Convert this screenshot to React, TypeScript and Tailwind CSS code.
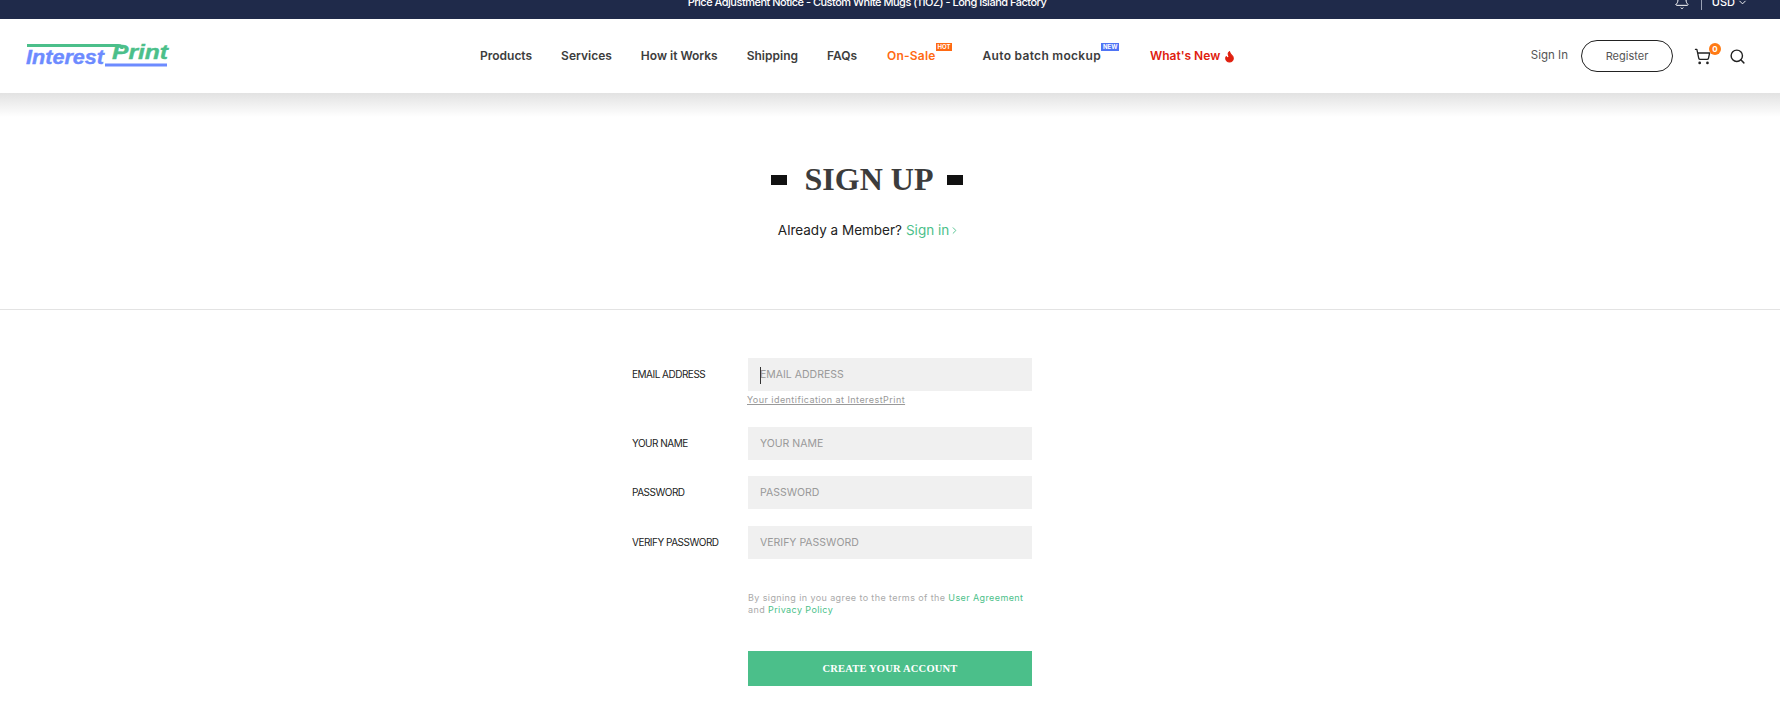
import React from 'react';
import { Bell, ChevronDown, ChevronRight, Flame, Search, ShoppingCart } from 'lucide-react';

const navItems = ['Products', 'Services', 'How it Works', 'Shipping', 'FAQs'];

const Logo: React.FC = () => (
  <svg width="144" height="26" viewBox="0 0 144 26" className="shrink-0 overflow-visible">
    <path d="M1 2.5H92Q96 2.5 96 6" stroke="#4bbf8a" strokeWidth="3" fill="none" />
    <text
      x="0"
      y="21"
      fontFamily="Liberation Sans"
      fontWeight="700"
      fontStyle="italic"
      fontSize="20"
      fill="#6d8bff"
      stroke="#6d8bff"
      strokeWidth="0.4"
      textLength="78"
      lengthAdjust="spacingAndGlyphs"
    >
      Interest
    </text>
    <path d="M79 22H141" stroke="#6d8bff" strokeWidth="3" fill="none" />
    <text
      x="86"
      y="16"
      fontFamily="Liberation Sans"
      fontWeight="700"
      fontStyle="italic"
      fontSize="21"
      fill="#4bbf8a"
      stroke="#4bbf8a"
      strokeWidth="0.4"
      textLength="56"
      lengthAdjust="spacingAndGlyphs"
    >
      Print
    </text>
  </svg>
);

const Badge: React.FC<{ text: string; cls: string }> = ({ text, cls }) => (
  <span className={`absolute -top-[4px] left-full px-[2px] text-[6px] leading-[8px] font-bold tracking-normal text-white ${cls}`}>{text}</span>
);

const Field: React.FC<{ label: string; hint?: boolean; caret?: boolean; cls: string }> = ({ label, hint, caret, cls }) => (
  <div className={`flex ${cls}`}>
    <label className="w-[116px] pt-[9px] text-[10px] leading-[14px] tracking-[-0.5px] text-[#222]">{label}</label>
    <div className="w-[284px]">
      <div className="relative">
        <input
          placeholder={label}
          className="block h-[33px] w-full bg-[#f0f0f0] px-[12px] pb-px text-[10.5px] placeholder:text-[#999] outline-none"
        />
        {caret && <span className="absolute left-[12px] top-[9px] h-[17px] w-px bg-[#333]" />}
      </div>
      {hint && (
        <p className="-ml-px mt-[3px] text-[9px] leading-[12px] tracking-[0.45px] text-[#999] underline">
          Your identification at InterestPrint
        </p>
      )}
    </div>
  </div>
);

const App: React.FC = () => {
  return (
    <div className="h-[722px] overflow-hidden bg-white font-['Inter','Open_Sans',sans-serif]">
      <div className="relative flex h-[19px] items-start justify-center overflow-hidden bg-[#1f2a4a] pr-[46px] text-white">
        <p className="-mt-[6px] text-[11px] font-medium leading-[16px] tracking-[-0.5px]">
          Price Adjustment Notice - Custom White Mugs (11OZ) - Long Island Factory
        </p>
        <div className="absolute right-[32px] -top-[6px] flex items-center">
          <Bell size={16} strokeWidth={1.5} />
          <span className="ml-[11px] h-[16px] w-px bg-[#9aa2b5]" />
          <span className="ml-[10px] text-[11px] font-medium leading-[16px]">USD</span>
          <ChevronDown size={11} className="ml-[2px]" />
        </div>
      </div>

      <header className="flex h-[74px] items-center bg-white pl-[26px] pr-[34px]">
        <Logo />
        <nav className="ml-[310px] flex items-center gap-[29px] text-[12px] font-semibold text-[#3d3d3d]">
          {navItems.map((item) => (
            <a key={item}>{item}</a>
          ))}
          <a className="relative ml-px tracking-[0.2px] text-[#ff6a13]">
            On-Sale
            <Badge text="HOT" cls="bg-[#ff6a13]" />
          </a>
          <a className="relative ml-[18px] tracking-[0.3px]">
            Auto batch mockup
            <Badge text="NEW" cls="bg-[#4f74f5]" />
          </a>
          <a className="ml-[20px] flex items-center gap-[3px] text-[#e0200f]">
            What's New <Flame size={13} fill="currentColor" />
          </a>
        </nav>
        <div className="ml-auto flex items-center">
          <a className="text-[11.5px] text-[#555]">Sign In</a>
          <button className="ml-[13px] h-[32px] w-[92px] rounded-full border border-[#222] text-[11px] text-[#555]">
            Register
          </button>
          <div className="relative ml-[21px]">
            <ShoppingCart size={17} strokeWidth={1.8} className="text-[#222]" />
            <span className="absolute -right-[10px] -top-[5px] flex h-[12px] w-[12px] items-center justify-center rounded-full bg-[#ff7a14] text-[8px] font-bold text-white">
              0
            </span>
          </div>
          <Search size={17} strokeWidth={2} className="ml-[18px] text-[#222]" />
        </div>
      </header>

      <div className="h-[24px] bg-gradient-to-b from-[#e2e2e2] to-white" />

      <section className="h-[193px] border-b border-[#e3e3e3] pr-[46px] pt-[45px]">
        <div className="flex items-center justify-center gap-[16px]">
          <span className="h-[10px] w-[16px] bg-[#111]" />
          <h1 className="ml-[2px] -mr-[2px] -translate-y-px font-['Liberation_Serif',serif] text-[32px] font-bold leading-[36px] text-[#3c3c3c]">SIGN UP</h1>
          <span className="h-[10px] w-[16px] bg-[#111]" />
        </div>
        <p className="mt-[22px] flex items-center justify-center pl-[4px] text-[13.5px] leading-[20px] text-[#222]">
          Already a Member?
          <a className="ml-[4px] flex items-center text-[#4bbf8a]">
            Sign in
            <ChevronRight size={11} />
          </a>
        </p>
      </section>

      <form className="ml-[632px] w-[400px] pt-[48px]">
        <Field label="EMAIL ADDRESS" hint caret cls="" />
        <Field label="YOUR NAME" cls="mt-[21px]" />
        <Field label="PASSWORD" cls="mt-[16px]" />
        <Field label="VERIFY PASSWORD" cls="mt-[17px]" />
        <div className="ml-[116px] w-[284px]">
          <p className="mt-[33px] text-[9px] leading-[12px] tracking-[0.4px] text-[#aaa]">
            By signing in you agree to the terms of the <a className="text-[#4bbf8a]">User Agreement</a> and{' '}
            <a className="text-[#4bbf8a]">Privacy Policy</a>
          </p>
          <button
            type="button"
            className="mt-[35px] h-[35px] w-full bg-[#4bbf8a] font-['Liberation_Serif',serif] text-[10.5px] font-bold tracking-[0.2px] text-white"
          >
            CREATE YOUR ACCOUNT
          </button>
        </div>
      </form>
    </div>
  );
};

export default App;
